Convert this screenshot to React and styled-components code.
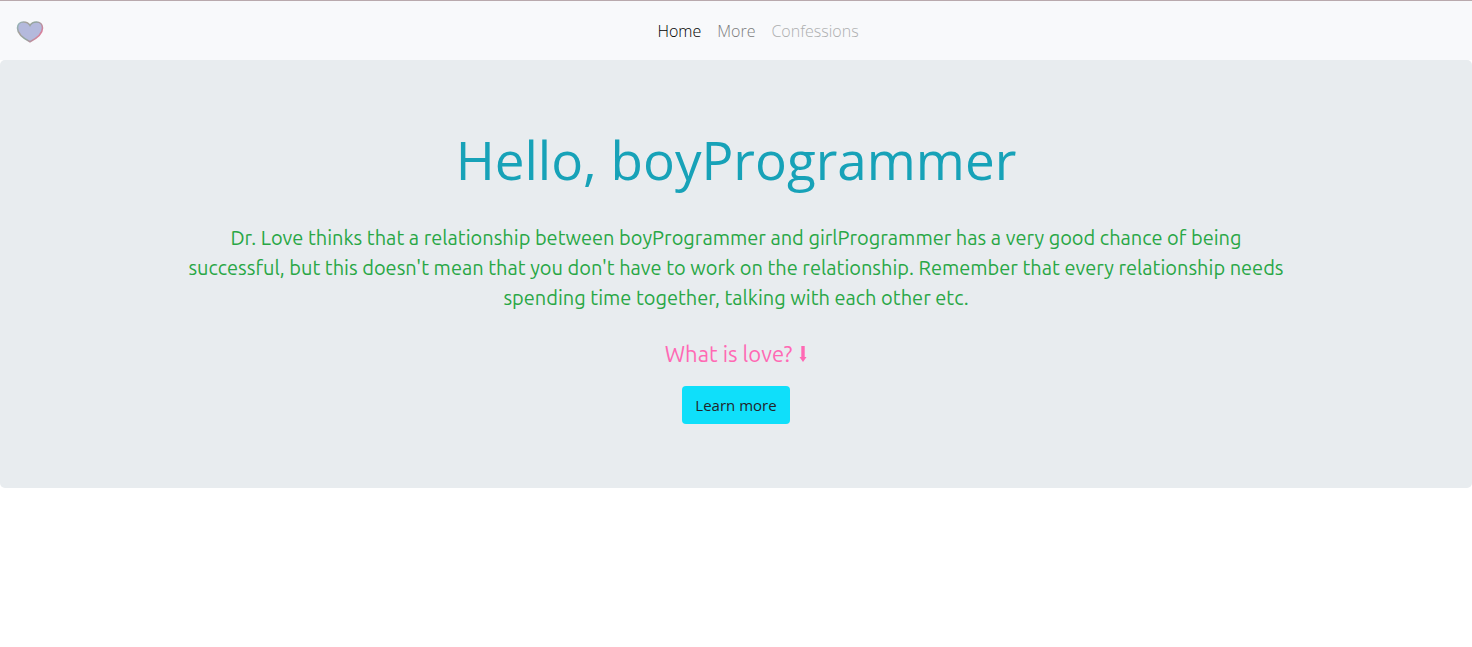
import React from "react";
import styled, { createGlobalStyle } from "styled-components";

const GlobalStyle = createGlobalStyle`
  *, *::before, *::after { box-sizing: border-box; }
  body {
    margin: 0;
    background: #fff;
    color: #212529;
    font: 400 16px/24px "Segoe UI", "Open Sans", sans-serif;
  }
`;

const Navbar = styled.nav`
  display: flex;
  align-items: center;
  height: 60px;
  padding: 0 16px;
  border-top: 1px solid #b9a9ad;
  background: #f8f9fb;
`;

const Brand = styled.a`
  display: flex;
  width: 28px;
  margin-right: 16px;
`;

const NavList = styled.ul`
  display: flex;
  flex: 1;
  justify-content: center;
  margin: 0;
  padding: 0;
  list-style: none;
`;

const NavLink = styled.a`
  display: block;
  padding: 8px;
  color: ${({ $color }) => $color};
  font-weight: 300;
  text-decoration: none;
`;

const Hero = styled.main`
  padding: 64px 32px;
  border-radius: 5px;
  background: #e8ecef;
  text-align: center;
`;

const Container = styled.div`
  max-width: 1140px;
  margin: 0 auto;
  padding: 0 15px;
`;

const Title = styled.h1`
  margin: 0 0 27px;
  color: #17a2b8;
  font-size: 53px;
  font-weight: 400;
  line-height: 72px;
`;

const Message = styled.p`
  margin: 0 0 26px;
  color: #28a745;
  font: 400 20px/30px Ubuntu, "Noto Sans", sans-serif;
`;

const Question = styled.p`
  display: flex;
  align-items: center;
  justify-content: center;
  gap: 7px;
  margin: 0 0 17px;
  color: #ff69b4;
  font: 400 22px/30px Ubuntu, "Noto Sans", sans-serif;
`;

const LearnButton = styled.button`
  height: 38px;
  padding: 0 13px;
  border: 0;
  border-radius: 4px;
  background: #0fdffa;
  color: #212529;
  font: inherit;
  font-size: 15px;
  cursor: pointer;
`;

const links = [
  { label: "Home", color: "#000" },
  { label: "More", color: "#7b7b7c" },
  { label: "Confessions", color: "#adaeaf" },
];

function Heart() {
  return (
    <svg width="28" height="24" viewBox="0 0 28 24" aria-hidden="true">
      <defs>
        <linearGradient id="heartEdge" x1="0" y1="0" x2="1" y2="0.5">
          <stop offset="0" stopColor="#8fb9bd" />
          <stop offset="0.3" stopColor="#a9a09b" />
          <stop offset="0.6" stopColor="#8fa7a0" />
          <stop offset="1" stopColor="#dc7f9b" />
        </linearGradient>
      </defs>
      <path
        d="M14 22.8 C10.5 21 1.5 15.5 1.5 9 C1.5 5.3 4.2 3 7.5 3 C10.5 3 12.8 4.2 14 6.4 C15.2 4.2 17.5 3 20.5 3 C23.8 3 26.5 5.3 26.5 9 C26.5 15.5 17.5 21 14 22.8 Z"
        fill="#b4b9dc"
        stroke="url(#heartEdge)"
        strokeWidth="1.6"
      />
    </svg>
  );
}

function DownArrow() {
  return (
    <svg width="8" height="18" viewBox="0 0 8 18" aria-hidden="true">
      <path d="M2.3 1 H5.7 V12 H7.5 L4 17 L0.5 12 H2.3 Z" fill="currentColor" />
    </svg>
  );
}

export default function App() {
  return (
    <>
      <GlobalStyle />
      <Navbar>
        <Brand href="#" aria-label="Dr. Love">
          <Heart />
        </Brand>
        <NavList>
          {links.map(({ label, color }) => (
            <li key={label}>
              <NavLink href="#" $color={color}>
                {label}
              </NavLink>
            </li>
          ))}
        </NavList>
      </Navbar>
      <Hero>
        <Container>
          <Title>Hello, boyProgrammer</Title>
          <Message>
            Dr. Love thinks that a relationship between boyProgrammer and
            girlProgrammer has a very good chance of being successful, but this
            doesn't mean that you don't have to work on the relationship.
            Remember that every relationship needs spending time together,
            talking with each other etc.
          </Message>
          <Question>
            What is love?
            <DownArrow />
          </Question>
          <LearnButton type="button">Learn more</LearnButton>
        </Container>
      </Hero>
    </>
  );
}
